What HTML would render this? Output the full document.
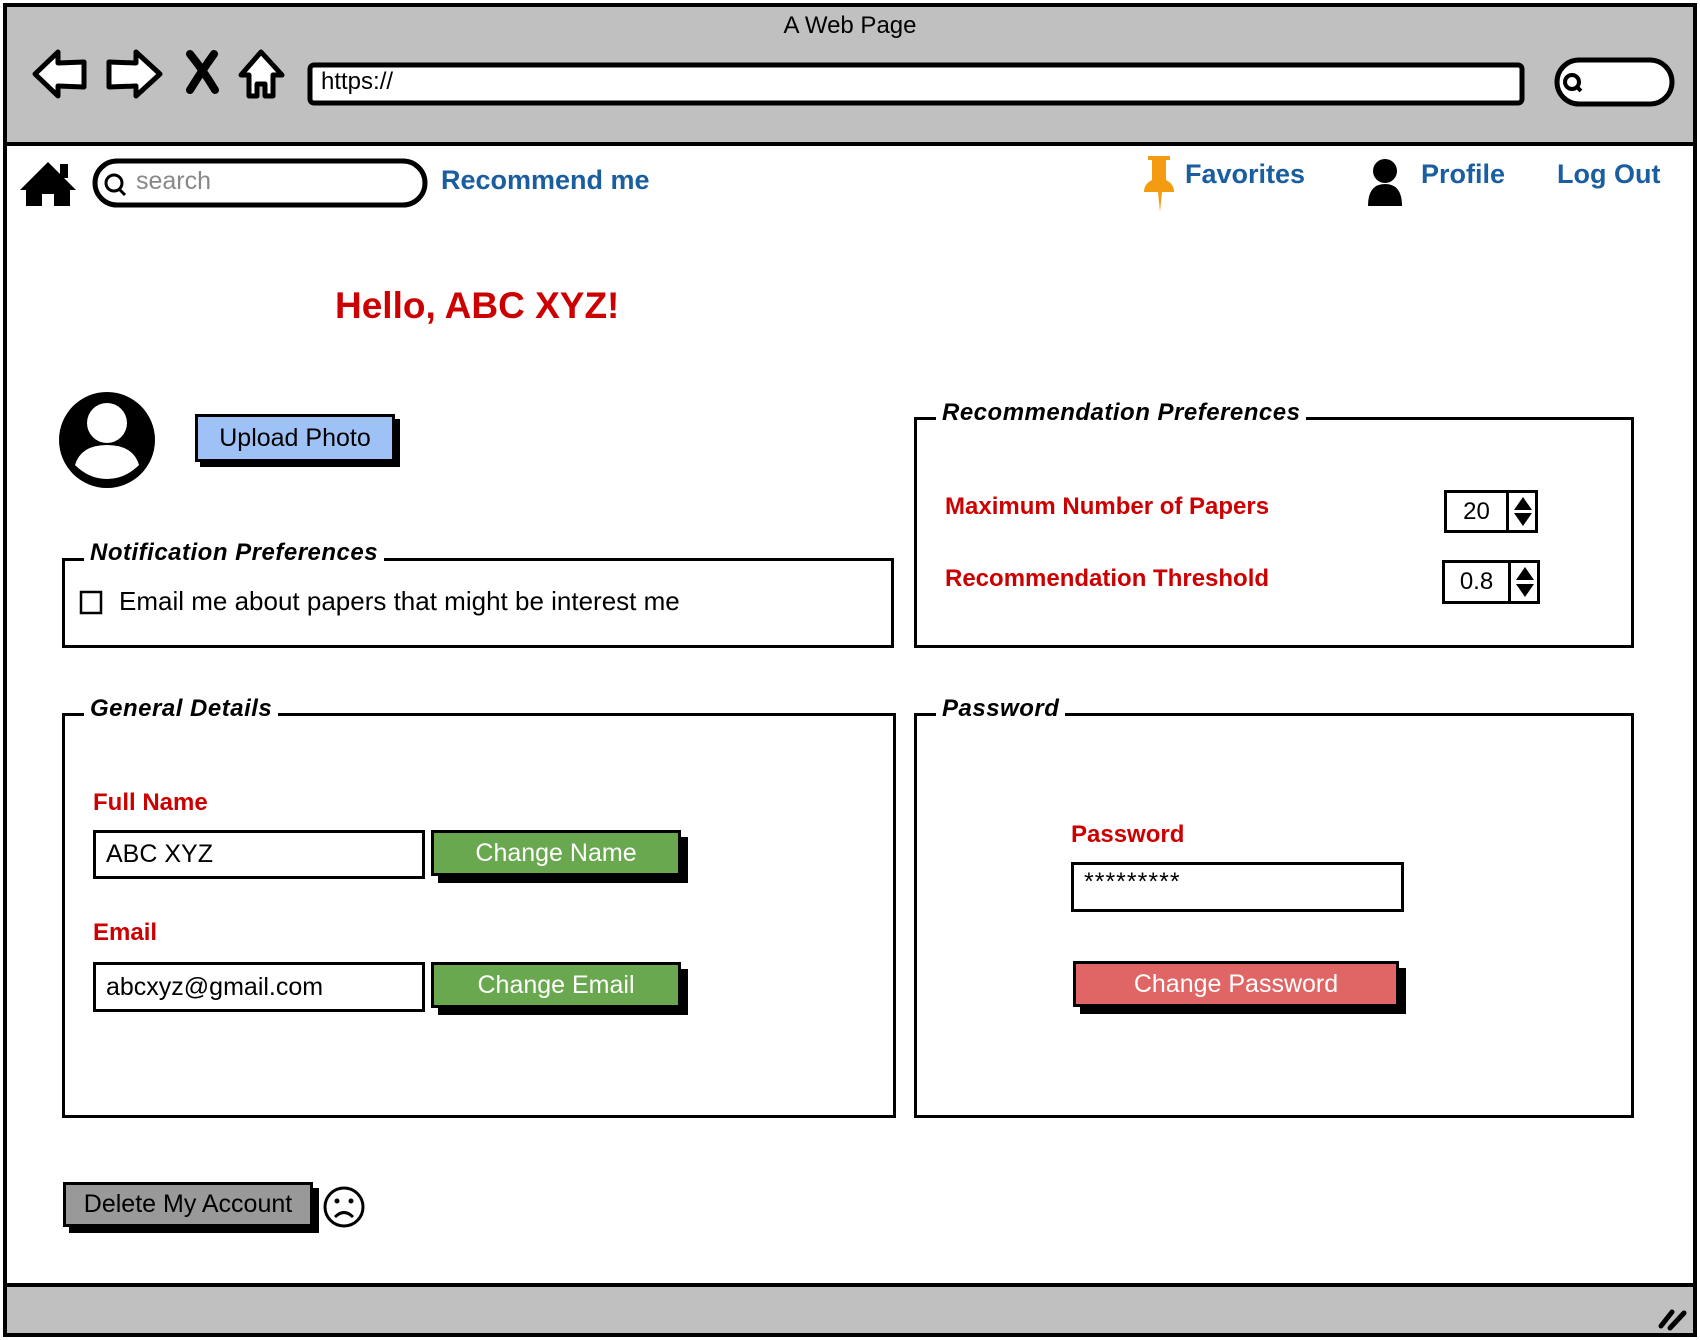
<!DOCTYPE html>
<html><head><meta charset="utf-8"><style>
*{margin:0;padding:0;box-sizing:border-box}
body{width:1700px;height:1340px;background:#fff;position:relative;overflow:hidden;font-family:"Liberation Sans",sans-serif;color:#000}
.a{position:absolute}
.box{position:absolute;border:3px solid #000}
.leg{position:absolute;background:#fff;font-style:italic;font-weight:bold;font-size:24px;padding:0 6px;line-height:30px;letter-spacing:0.5px}
.red{color:#cc0000;font-weight:bold;font-size:24px}
.blue{color:#1b5ea0;font-weight:bold;font-size:27px}
.btn{position:absolute;border:3px solid #000;box-shadow:7px 7px 0 #000;text-align:center;font-size:25px}
.inp{position:absolute;border:3px solid #000;background:#fff;font-size:25px;padding-left:10px}
</style></head><body>
<div class="a" style="left:3px;top:3px;width:1694px;height:1334px;border:4px solid #000;"></div>
<div class="a" style="left:7px;top:7px;width:1686px;height:139px;background:#c0c0c0;border-bottom:4px solid #000"></div>
<div class="a" style="left:7px;top:1283px;width:1686px;height:50px;background:#c0c0c0;border-top:4px solid #000"></div>
<div class="a" style="left:0;top:12px;width:1700px;text-align:center;font-size:24px">A Web Page</div>
<svg class="a" style="left:0;top:0" width="1700" height="1340">
<g fill="#fff" stroke="#000" stroke-width="5" stroke-linejoin="round">
<path d="M35 74 L58 52 L58 63 L84 62 L84 87 L58 86 L58 96 Z"/>
<path d="M160 74 L136 52 L136 63 L109 62 L109 87 L136 86 L136 96 Z"/>
<path d="M241 75 L261 52 L282 75 L273 75 L273 96 L265 96 L265 84 L257 84 L257 96 L249 96 L249 75 Z"/>
<rect x="310" y="65" width="1212" height="38" rx="4"/>
<rect x="1557" y="60" width="115" height="44" rx="22"/>
<rect x="95" y="161" width="330" height="44" rx="22"/>
</g>
<path d="M190 54 Q203 70 215 90 M214 54 Q201 72 190 90" stroke="#000" stroke-width="8" fill="none" stroke-linecap="round"/>
<circle cx="1572" cy="82" r="7" fill="none" stroke="#000" stroke-width="4"/><path d="M1576 86 L1581 91" stroke="#000" stroke-width="4"/>
<circle cx="114" cy="183" r="8" fill="none" stroke="#000" stroke-width="3"/><path d="M119 189 L125 195" stroke="#000" stroke-width="3"/>
<path d="M20 190 L48 162 L76 190 L70 190 L70 206 L54 206 L54 194 L42 194 L42 206 L26 206 L26 190 Z" fill="#000"/>
<rect x="60" y="164" width="8" height="14" fill="#000"/>
<path d="M1148 156 h22 v4 h-4 v20 q8 4 8 12 h-30 q0 -8 8 -12 v-20 h-4 z" fill="#f39c12"/>
<path d="M1158 192 h4 l-2 20 z" fill="#f39c12"/>
<circle cx="1385" cy="171" r="12" fill="#000"/>
<path d="M1368 206 q0 -22 17 -22 q17 0 17 22 z" fill="#000"/>
<circle cx="107" cy="440" r="48" fill="#000"/>
<circle cx="107" cy="423" r="20" fill="#fff"/>
<path d="M75 465 q6 -20 32 -20 q26 0 32 20 q-14 14 -32 14 q-18 0 -32 -14 z" fill="#fff"/>
<rect x="81" y="592" width="20" height="21" fill="none" stroke="#000" stroke-width="2.5"/>
<circle cx="344" cy="1207" r="19" fill="#fff" stroke="#000" stroke-width="3"/>
<circle cx="337" cy="1201" r="2.5"/><circle cx="351" cy="1201" r="2.5"/>
<path d="M335 1217 q9 -9 18 0" fill="none" stroke="#000" stroke-width="3"/>
<path d="M1661 1326 L1672 1312 M1670 1328 L1684 1313" stroke="#000" stroke-width="5" stroke-linecap="round"/>
</svg>
<div class="a" style="left:321px;top:64px;font-size:24px;line-height:36px">https://</div>
<div class="a" style="left:136px;top:167px;font-size:25px;color:#888">search</div>
<div class="a blue" style="left:441px;top:165px">Recommend me</div>
<div class="a blue" style="left:1185px;top:159px">Favorites</div>
<div class="a blue" style="left:1421px;top:159px">Profile</div>
<div class="a blue" style="left:1557px;top:159px">Log Out</div>
<div class="a" style="left:335px;top:285px;color:#cc0000;font-weight:bold;font-size:37px">Hello, ABC XYZ!</div>
<div class="btn" style="left:195px;top:414px;width:200px;height:48px;background:#9ec2f5;line-height:42px;box-shadow:5px 5px 0 #000">Upload Photo</div>

<div class="box" style="left:62px;top:558px;width:832px;height:90px"></div>
<div class="leg" style="left:84px;top:538px">Notification Preferences</div>
<div class="a" style="left:119px;top:586px;font-size:26px">Email me about papers that might be interest me</div>

<div class="box" style="left:914px;top:417px;width:720px;height:231px"></div>
<div class="leg" style="left:936px;top:398px">Recommendation Preferences</div>
<div class="a red" style="left:945px;top:493px">Maximum Number of Papers</div>
<div class="a red" style="left:945px;top:565px">Recommendation Threshold</div>
<div class="a" style="left:1444px;top:490px;width:94px;height:43px;border:3px solid #000;background:#fff"><div class="a" style="left:0;top:0;width:62px;height:37px;border-right:3px solid #000;text-align:center;font-size:24px;line-height:37px">20</div><svg class="a" style="left:66px;top:3px" width="20" height="31"><path d="M10 1 L19 14 H1 Z M10 30 L19 17 H1 Z" fill="#000"/></svg></div>
<div class="a" style="left:1442px;top:560px;width:98px;height:44px;border:3px solid #000;background:#fff"><div class="a" style="left:0;top:0;width:66px;height:38px;border-right:3px solid #000;text-align:center;font-size:24px;line-height:38px">0.8</div><svg class="a" style="left:70px;top:3px" width="20" height="32"><path d="M10 1 L19 14 H1 Z M10 31 L19 18 H1 Z" fill="#000"/></svg></div>

<div class="box" style="left:62px;top:713px;width:834px;height:405px"></div>
<div class="leg" style="left:84px;top:694px">General Details</div>
<div class="a red" style="left:93px;top:789px">Full Name</div>
<div class="inp" style="left:93px;top:830px;width:332px;height:49px;line-height:43px">ABC XYZ</div>
<div class="btn" style="left:431px;top:830px;width:250px;height:46px;background:#6aa84f;color:#fff;line-height:40px">Change Name</div>
<div class="a red" style="left:93px;top:919px">Email</div>
<div class="inp" style="left:93px;top:962px;width:332px;height:50px;line-height:44px">abcxyz@gmail.com</div>
<div class="btn" style="left:431px;top:962px;width:250px;height:46px;background:#6aa84f;color:#fff;line-height:40px">Change Email</div>

<div class="box" style="left:914px;top:713px;width:720px;height:405px"></div>
<div class="leg" style="left:936px;top:694px">Password</div>
<div class="a red" style="left:1071px;top:821px">Password</div>
<div class="inp" style="left:1071px;top:862px;width:333px;height:50px;line-height:34px;font-size:25px;letter-spacing:1px">*********</div>
<div class="btn" style="left:1073px;top:961px;width:326px;height:46px;background:#e06666;color:#fff;line-height:40px">Change Password</div>

<div class="btn" style="left:63px;top:1182px;width:250px;height:45px;background:#999;line-height:39px;box-shadow:6px 6px 0 #000">Delete My Account</div>
</body></html>
